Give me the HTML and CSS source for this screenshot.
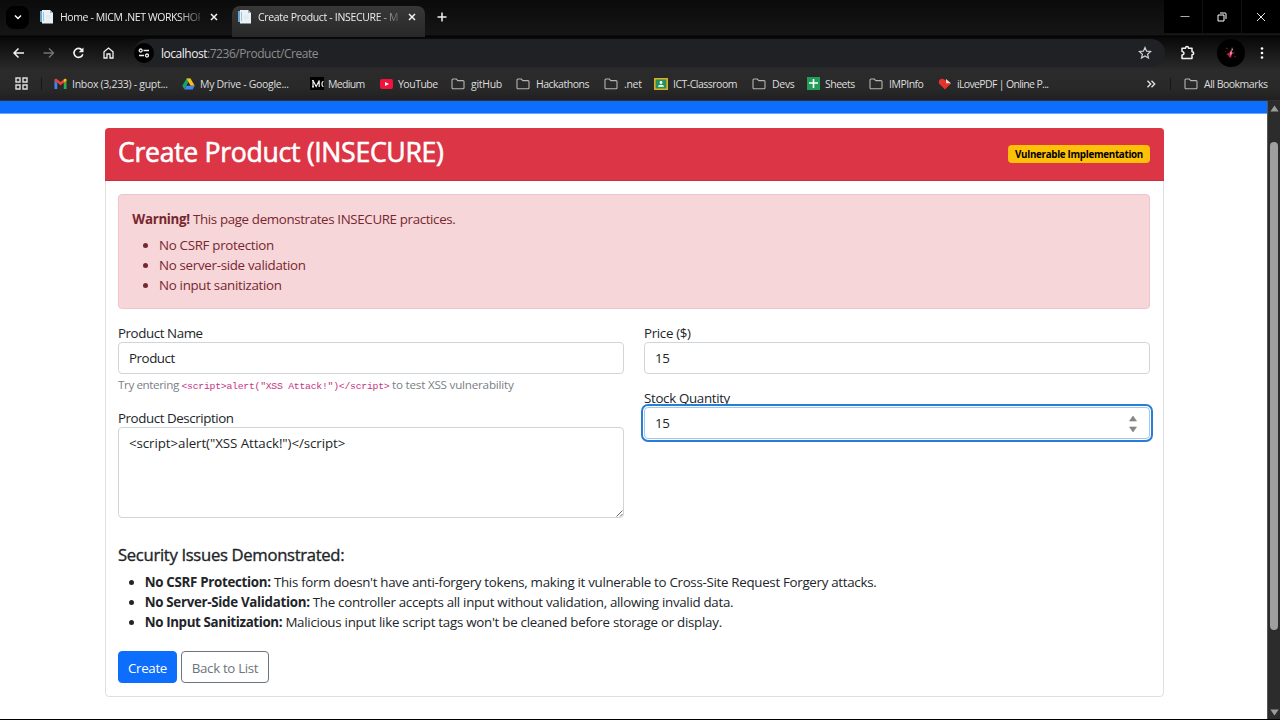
FILE: index.html
```html
<!DOCTYPE html>
<html lang="en">
<head>
<meta charset="utf-8">
<title>Create Product - INSECURE - MICM .NET WORKSHOP</title>
<link rel="stylesheet" href="styles.css">
</head>
<body>
<svg class="defs" aria-hidden="true">
  <symbol id="folder" viewBox="0 0 14 12"><path d="M1 9.8V2a1 1 0 0 1 1-1h3.3l1.5 1.6H12a1 1 0 0 1 1 1v6.200a1 1 0 0 1-1 1H2a1 1 0 0 1-1-1z" fill="none" stroke="#b4b4b4" stroke-width="1.100"/></symbol>
  <symbol id="page" viewBox="0 0 14 14"><path d="M0 1h4v11H0z" fill="#6ba5ca"/><path d="M2 0h8l3 3v10.500H2z" fill="#e8f1f6"/><path d="M10 0v3h3z" fill="#9fb5c2"/><path d="M3.500 2v9" stroke="#8fb8d3" stroke-width=".8"/><path d="M6 6h4M6 8h5" stroke="#d5e0e7" stroke-width=".7"/></symbol>
  <symbol id="close" viewBox="0 0 10 10"><path d="M2 2l6 6M8 2L2 8" stroke="#f2f2f2" stroke-width="1.500"/></symbol>
</svg>
<header class="browser">
  <div class="tabs">
    <button class="tab-search"><svg width="10" height="10" viewBox="0 0 10 10"><path d="M2 3.500l3 3 3-3" fill="none" stroke="#fff" stroke-width="1.500"/></svg></button>
    <div class="tab"><svg width="14" height="14"><use href="#page"/></svg><span class="tab-title">Home - MICM .NET WORKSHOP</span><svg width="10" height="10"><use href="#close"/></svg></div>
    <div class="tab active"><svg width="14" height="14"><use href="#page"/></svg><span class="tab-title">Create Product - INSECURE - M</span><svg width="10" height="10"><use href="#close"/></svg></div>
    <svg class="plus" width="10" height="10" viewBox="0 0 10 10"><path d="M5 .5v9M.5 5h9" stroke="#f2f2f2" stroke-width="1.500"/></svg>
    <div class="window-controls">
      <span><svg width="10" height="10" viewBox="0 0 10 10"><path d="M.5 4.500h9" stroke="#aaa"/></svg></span>
      <span><svg width="10" height="10" viewBox="0 0 10 10"><path d="M1 3h6v6H1z" fill="none" stroke="#fff"/><path d="M3 1h5.200Q9 1 9 1.800V7" fill="none" stroke="#fff"/></svg></span>
      <span><svg width="10" height="10" viewBox="0 0 10 10"><path d="M1 1l8 8M9 1L1 9" stroke="#e8e8e8"/></svg></span>
    </div>
  </div>
  <div class="toolbar">
    <div class="nav">
      <svg viewBox="0 0 14 14"><path d="M12 7H2M6.500 2.500L2 7l4.500 4.500" fill="none" stroke="#f2f2f2" stroke-width="1.500"/></svg>
      <svg viewBox="0 0 14 14"><path d="M1.500 7H11.500M7 2.500L11.500 7 7 11.500" fill="none" stroke="#747474" stroke-width="1.400"/></svg>
      <svg viewBox="0 0 14 14"><path d="M10.800 8.200A4.500 4.500 0 1 1 10.100 4.200" fill="none" stroke="#f2f2f2" stroke-width="1.600"/><path d="M11.500 1.500v4.800H6.700z" fill="#f2f2f2"/></svg>
      <svg viewBox="0 0 14 14"><path d="M2 12V5.800L6.500 2 11 5.800V12H8V8H5v4z" fill="none" stroke="#f2f2f2" stroke-width="1.300"/></svg>
    </div>
    <div class="address">
      <span class="site-info"><svg width="12" height="10" viewBox="0 0 12 10"><g fill="none" stroke="#eee" stroke-width="1.300"><circle cx="2.700" cy="2.500" r="1.500"/><path d="M5.500 2.500H11M1 7.500h5"/><circle cx="9" cy="7.500" r="1.500"/></g></svg></span>
      <span class="url"><b>localhost</b>:7236/Product/Create</span>
      <svg class="star" width="14" height="14" viewBox="0 0 14 14"><path d="M7 1.500l1.600 3.700 4 .3-3 2.700.9 3.900L7 10l-3.500 2.100.9-3.900-3-2.700 4-.3z" fill="none" stroke="#d0d0d0" stroke-width="1.200"/></svg>
    </div>
    <svg class="puzzle" width="15" height="15" viewBox="0 0 15 15"><path d="M2 3.200h3.500Q5.500 1.500 7 1.500t1.500 1.700H12v3.600Q13.700 6.800 13.700 8.300T12 9.800v3.700H2V10Q4 9.800 4 8.300T2 6.600z" fill="none" stroke="#f2f2f2" stroke-width="1.500" stroke-linejoin="round"/></svg>
    <span class="avatar"><svg width="28" height="28" viewBox="0 0 28 28"><path d="M15 8l1 3-2 2z" fill="#b9a093"/><path d="M9 15l3-1 2-3 1 2 3 1-3 1-1 4-2-1-1-2z" fill="#b82046"/><path d="M13 13l2-1v3l-2 2z" fill="#ef7d95"/><path d="M9 9l2 1M17 17l2 1M9 12l-1 1" stroke="#7d1425"/></svg></span>
    <svg class="dots" width="4" height="14" viewBox="0 0 4 14"><g fill="#fff"><circle cx="2" cy="2.500" r="1.300"/><circle cx="2" cy="7" r="1.300"/><circle cx="2" cy="11.500" r="1.300"/></g></svg>
  </div>
  <nav class="bookmarks">
    <svg class="apps" width="13" height="13" viewBox="0 0 13 13"><path d="M1 1h4v4H1zM8 1h4v4H8zM1 8h4v4H1zM8 8h4v4H8z" fill="none" stroke="#dedede" stroke-width="1.400"/></svg>
    <i class="divider"></i>
    <a><svg width="13" height="12" viewBox="0 0 13 12"><path d="M.5 2v9h2.700V5z" fill="#4285f4"/><path d="M9.800 5v6h2.700V2z" fill="#34a853"/><path d="M.5 2.500V2C.5.600 2 .5 3 1.200L6.500 4 10 1.200c1-.7 2.500-.6 2.500.8v.5l-6 4.700z" fill="#ea4335"/><path d="M9.800 1.400v3.400l2.700-2.100V2c0-1.300-1.500-1.500-2.700-.6z" fill="#fbbc04"/></svg><span>Inbox (3,233) - gupt...</span></a>
    <a><svg width="13" height="12" viewBox="0 0 13 12"><path d="M4.500.5h4L4.500 7.500 2.300 11.300.3 7.800z" fill="#1ca260"/><path d="M4.500.5h4l4.200 7.300H8.700z" fill="#fbc117"/><path d="M4.300 7.800h8.400l-2 3.700H2.300z" fill="#4285f4"/></svg><span>My Drive - Google...</span></a>
    <a class="tight medium"><svg width="14" height="13" viewBox="0 0 14 13"><path d="M0 0h14v13H0z" fill="#000"/><path d="M3 10V3.500l3.200 6 3-6V10M2 3.500h1.500M2 9.800h2" fill="none" stroke="#eee" stroke-width="1.200"/><path d="M13.500 4.500c-2 0-2 5 0 5" fill="none" stroke="#eee" stroke-width="1.200"/></svg><span>Medium</span></a>
    <a class="snug"><svg width="13" height="10" viewBox="0 0 13 10"><rect width="13" height="10" rx="2" fill="#f0143c"/><path d="M5 3l4 2-4 2z" fill="#fff"/></svg><span>YouTube</span></a>
    <a class="folder"><svg width="14" height="12"><use href="#folder"/></svg><span>gitHub</span></a>
    <a class="folder snug"><svg width="14" height="12"><use href="#folder"/></svg><span>Hackathons</span></a>
    <a class="folder"><svg width="14" height="12"><use href="#folder"/></svg><span>.net</span></a>
    <a class="snug"><svg width="14" height="12" viewBox="0 0 14 12"><path d="M.8.8h12.400v10.400H.8z" fill="#23935b" stroke="#e0ae22" stroke-width="1.600"/><circle cx="7" cy="4.500" r="1.400" fill="#fff"/><path d="M4 8.800Q4 6.800 7 6.800t3 2z" fill="#fff"/></svg><span>ICT-Classroom</span></a>
    <a class="folder"><svg width="14" height="12"><use href="#folder"/></svg><span>Devs</span></a>
    <a class="snug"><svg width="13" height="13" viewBox="0 0 13 13"><path d="M0 0h13v13H0z" fill="#219d58"/><path d="M6.500 2v9M2 6h9" stroke="#fff" stroke-width="1.600"/></svg><span>Sheets</span></a>
    <a class="folder snug"><svg width="14" height="12"><use href="#folder"/></svg><span>IMPInfo</span></a>
    <a class="tight"><svg width="14" height="12" viewBox="0 0 14 12"><path d="M7 11.500L1 5.500C-.5 2 4-1 7 2l6 3.500z" fill="#e5322d"/><path d="M8 1l5 4.300H8z" fill="#f6dada"/></svg><span>iLovePDF | Online P...</span></a>
    <svg class="more" width="10" height="10" viewBox="0 0 10 10"><path d="M1.500 1.800L4.700 5 1.500 8.200M5.500 1.800L8.700 5 5.500 8.200" fill="none" stroke="#e8e8e8" stroke-width="1.300"/></svg>
    <i class="divider"></i>
    <a class="folder snug"><svg width="14" height="12"><use href="#folder"/></svg><span>All Bookmarks</span></a>
  </nav>
</header>
<div class="viewport">
  <main>
    <div class="site-nav"></div>
    <section class="card">
      <div class="card-header"><h2>Create Product (INSECURE)</h2><span class="badge">Vulnerable Implementation</span></div>
      <div class="card-body">
        <div class="alert">
          <p><strong>Warning!</strong> <span class="lead">This page demonstrates INSECURE practices.</span></p>
          <ul><li>No CSRF protection</li><li>No server-side validation</li><li>No input sanitization</li></ul>
        </div>
        <form>
          <div class="fields">
            <div>
              <div class="group">
                <label>Product Name</label>
                <div class="control name">Product</div>
                <small>Try entering <code>&lt;script&gt;alert("XSS Attack!")&lt;/script&gt;</code> <span class="hint-end">to test XSS vulnerability</span></small>
              </div>
              <div class="group">
                <label>Product Description</label>
                <div class="control area"><span>&lt;script&gt;alert("XSS Attack!")&lt;/script&gt;</span><svg class="grip" width="7" height="7" viewBox="0 0 7 7"><path d="M.5 6.500l6-6M4 6.500L6.500 4" stroke="#555" stroke-width=".9"/></svg></div>
              </div>
            </div>
            <div>
              <div class="group">
                <label class="loose">Price ($)</label>
                <div class="control">15</div>
              </div>
              <div class="group">
                <label class="loose">Stock Quantity</label>
                <div class="control focused"><span>15</span><svg width="8" height="18" viewBox="0 0 8 18"><path d="M.5 6L4 1l3.500 5zM.5 12h7L4 17z" fill="#858585" stroke="#858585" stroke-width=".6" stroke-linejoin="round"/></svg></div>
              </div>
            </div>
          </div>
          <h5>Security Issues Demonstrated:</h5>
          <ul class="issues">
            <li><strong>No CSRF Protection:</strong> This form doesn't have anti-forgery tokens, making it vulnerable to Cross-Site Request Forgery attacks.</li>
            <li><strong>No Server-Side Validation:</strong> The controller accepts all input without validation, allowing invalid data.</li>
            <li><strong class="snug-strong">No Input Sanitization:</strong> <span class="storage">Malicious input like script tags won't be cleaned before storage or display.</span></li>
          </ul>
          <div class="actions"><button type="button" class="btn primary">Create</button><button type="button" class="btn outline">Back to List</button></div>
        </form>
      </div>
    </section>
  </main>
  <div class="scrollbar"><svg width="9" height="7" viewBox="0 0 9 7"><path d="M4.500.5L8.700 6.500H.3z" fill="#9b9b9b"/></svg><div class="thumb"></div><svg width="9" height="7" viewBox="0 0 9 7"><path d="M4.500 6.500L8.700.5H.3z" fill="#9b9b9b"/></svg></div>
</div>
</body>
</html>
```
FILE: styles.css
```css
* { box-sizing: border-box; }
body { margin: 0; width: 1280px; height: 720px; overflow: hidden; display: flex; flex-direction: column; background: #000; color: #212529; font: 13.33px/20px "Open Sans", "Noto Sans", sans-serif; letter-spacing: -.3px; }
.defs { display: none; }
svg { flex: none; display: block; }
.browser { flex: none; height: 101px; font-size: 10.5px; line-height: 16px; color: #dedede; white-space: nowrap; }
.tabs { height: 37px; display: flex; align-items: center; background: linear-gradient(#0b0b0b, #151515 35px, #030303 36px); padding-left: 6px; }
.tab-search { width: 23px; height: 23px; border: 0; border-radius: 8px; background: #000; padding: 0; display: grid; place-items: center; margin-top: -3px; }
.tab { display: flex; align-items: center; height: 26px; width: 198px; padding-left: 11px; margin-top: -3px; }
.tab.active { width: 193px; height: 31px; margin-top: 5px; background: linear-gradient(#383838, #282828); border-radius: 8px 8px 0 0; padding: 0 0 8px 6px; margin-left: 5px; }
.tab-title { flex: none; width: 140px; margin: 0 9px 0 6px; overflow: hidden; color: #ececec; letter-spacing: -.4px; mask-image: linear-gradient(90deg, #000 118px, rgba(0,0,0,.25) 140px); }
.active .tab-title { letter-spacing: -.33px; }
.plus { margin: -3px 0 0 12px; }
.window-controls { margin-left: auto; height: 33px; display: grid; grid-template-columns: 38px 38px 38px; gap: 1px; align-self: flex-start; background: #111; }
.window-controls span { background: #000; display: grid; place-items: center; }
.window-controls span:first-child { padding-left: 4px; }
.toolbar { height: 32px; display: flex; align-items: center; background: linear-gradient(#080808, #292929); }
.nav { display: flex; gap: 16px; padding-left: 12px; width: 134px; flex: none; }
.nav svg { width: 14px; height: 14px; }
.address { width: 1031px; height: 28px; border-radius: 14px; background: #202124; display: flex; align-items: center; font-size: 12px; letter-spacing: -.47px; color: #8d8d8d; }
.address b { font-weight: 400; color: #eee; }
.site-info { width: 20px; height: 20px; border-radius: 50%; background: #000; display: grid; place-items: center; }
.url { margin: 1px 0 0 7px; }
.star { margin-left: auto; margin-right: 13px; }
.puzzle { margin: -2px 0 0 15px; }
.avatar { width: 28px; height: 28px; border-radius: 50%; background: #000; margin-left: 22px; }
.dots { margin-left: 15px; }
.bookmarks { height: 32px; padding: 0 0 2px 15px; display: grid; grid-template-columns: 26px 13px 128px 128px 70px 71px 65px 88px 50px 98px 55px 62px 69px 208px 24px 14px auto; align-items: center; background: linear-gradient(#2b2b2b, #292929 60%, #202020); border-bottom: 1px solid #313131; }
.bookmarks a { display: flex; align-items: center; gap: 5px; }
.bookmarks .folder { gap: 6px; }
.bookmarks .medium { gap: 4px; }
.snug { letter-spacing: -.5px; }
.tight { letter-spacing: -.65px; }
.divider { width: 1px; height: 12px; background: #151515; }
.viewport { height: 618px; display: flex; background: #2c2c2c; }
main { width: 1267px; background: #fff; display: flow-root; }
.site-nav { height: 13px; background: #0d6efd; border-bottom: 1px solid #69a5fd; }
.card { margin: 14px 103px 0 105px; width: 1059px; height: 568.5px; border: 1px solid #dfdfdf; border-radius: 4px; }
.card-header { margin: -1px -1px 0; height: 53px; display: flex; align-items: center; justify-content: space-between; padding: 0 14px 0 13px; background: #dc3545; border-bottom: 1px solid #c5303e; border-radius: 4px 4px 0 0; color: #fff; }
h2 { margin: 0 0 4px; font-size: 26.67px; line-height: 32px; font-weight: 500; letter-spacing: -.33px; -webkit-text-stroke: .6px currentColor; white-space: nowrap; }
.badge { height: 18px; width: 142px; border-radius: 4px; background: #ffc107; color: #000; font-size: 9.8px; line-height: 19px; font-weight: 700; text-align: center; white-space: nowrap; }
.card-body { padding: 13.3px 13px; }
.alert { height: 114.7px; width: 1032px; padding: 13.7px 13.3px; margin-left: -1px; border: 1px solid #eec5ca; border-radius: 4px; background: #f6d6d9; color: #762730; }
.lead { letter-spacing: -.36px; }
p { margin: 0 0 6px; }
ul { margin: 0; padding-left: 26.67px; }
.fields { margin: 13.7px 0 0 -1px; width: 1032px; display: grid; grid-template-columns: 506px 506px; column-gap: 20px; }
label { display: block; height: 19.3px; letter-spacing: -.42px; }
label.loose { letter-spacing: -.33px; }
.group { margin-bottom: 13.6px; }
.control { height: 32px; border: 1px solid #d0d5da; border-radius: 4px; padding: 7px 10px 5px; line-height: 19px; display: flex; align-items: center; justify-content: space-between; background: #fff; }
.control.name { letter-spacing: -.45px; }
.control.area { position: relative; height: 91.3px; padding-top: 6px; align-items: flex-start; letter-spacing: -.08px; }
.grip { position: absolute; right: 0; bottom: 0; }
.focused { border-color: #9ccaf8; outline: 2px solid #2b7cd3; outline-offset: 1px; padding-right: 12px; }
small { display: block; height: 20px; padding-top: 1.5px; font-size: 11.67px; line-height: 20px; letter-spacing: -.4px; color: #7a8086; white-space: nowrap; }
.hint-end { letter-spacing: -.22px; }
code { font-family: "Liberation Mono", monospace; font-size: 9.8px; letter-spacing: -.26px; color: #c53482; }
h5 { margin: 13.6px 0 6.4px -1px; font-size: 16.67px; line-height: 20px; font-weight: 500; letter-spacing: -.32px; -webkit-text-stroke: .35px currentColor; }
.issues { margin-left: -1px; white-space: nowrap; }
.snug-strong { letter-spacing: -.36px; }
.storage { letter-spacing: -.27px; }
.actions { margin: 19px 0 0 -1px; display: flex; gap: 4px; }
.btn { height: 32px; border: 1px solid #6c757d; border-radius: 4px; padding: 2px 0 0; background: #fff; color: #6c757d; font: inherit; letter-spacing: -.33px; white-space: nowrap; }
.primary { width: 59px; color: #fff; background: #0d6efd; border-color: #0d6efd; }
.outline { width: 88px; }
.scrollbar { width: 13px; display: flex; flex-direction: column; align-items: center; padding: 4px 0 3px; border-left: 1px solid #555; }
.thumb { width: 8px; height: 488px; margin: 30px 0 auto; background: #9f9f9f; border-radius: 4px; }
```
